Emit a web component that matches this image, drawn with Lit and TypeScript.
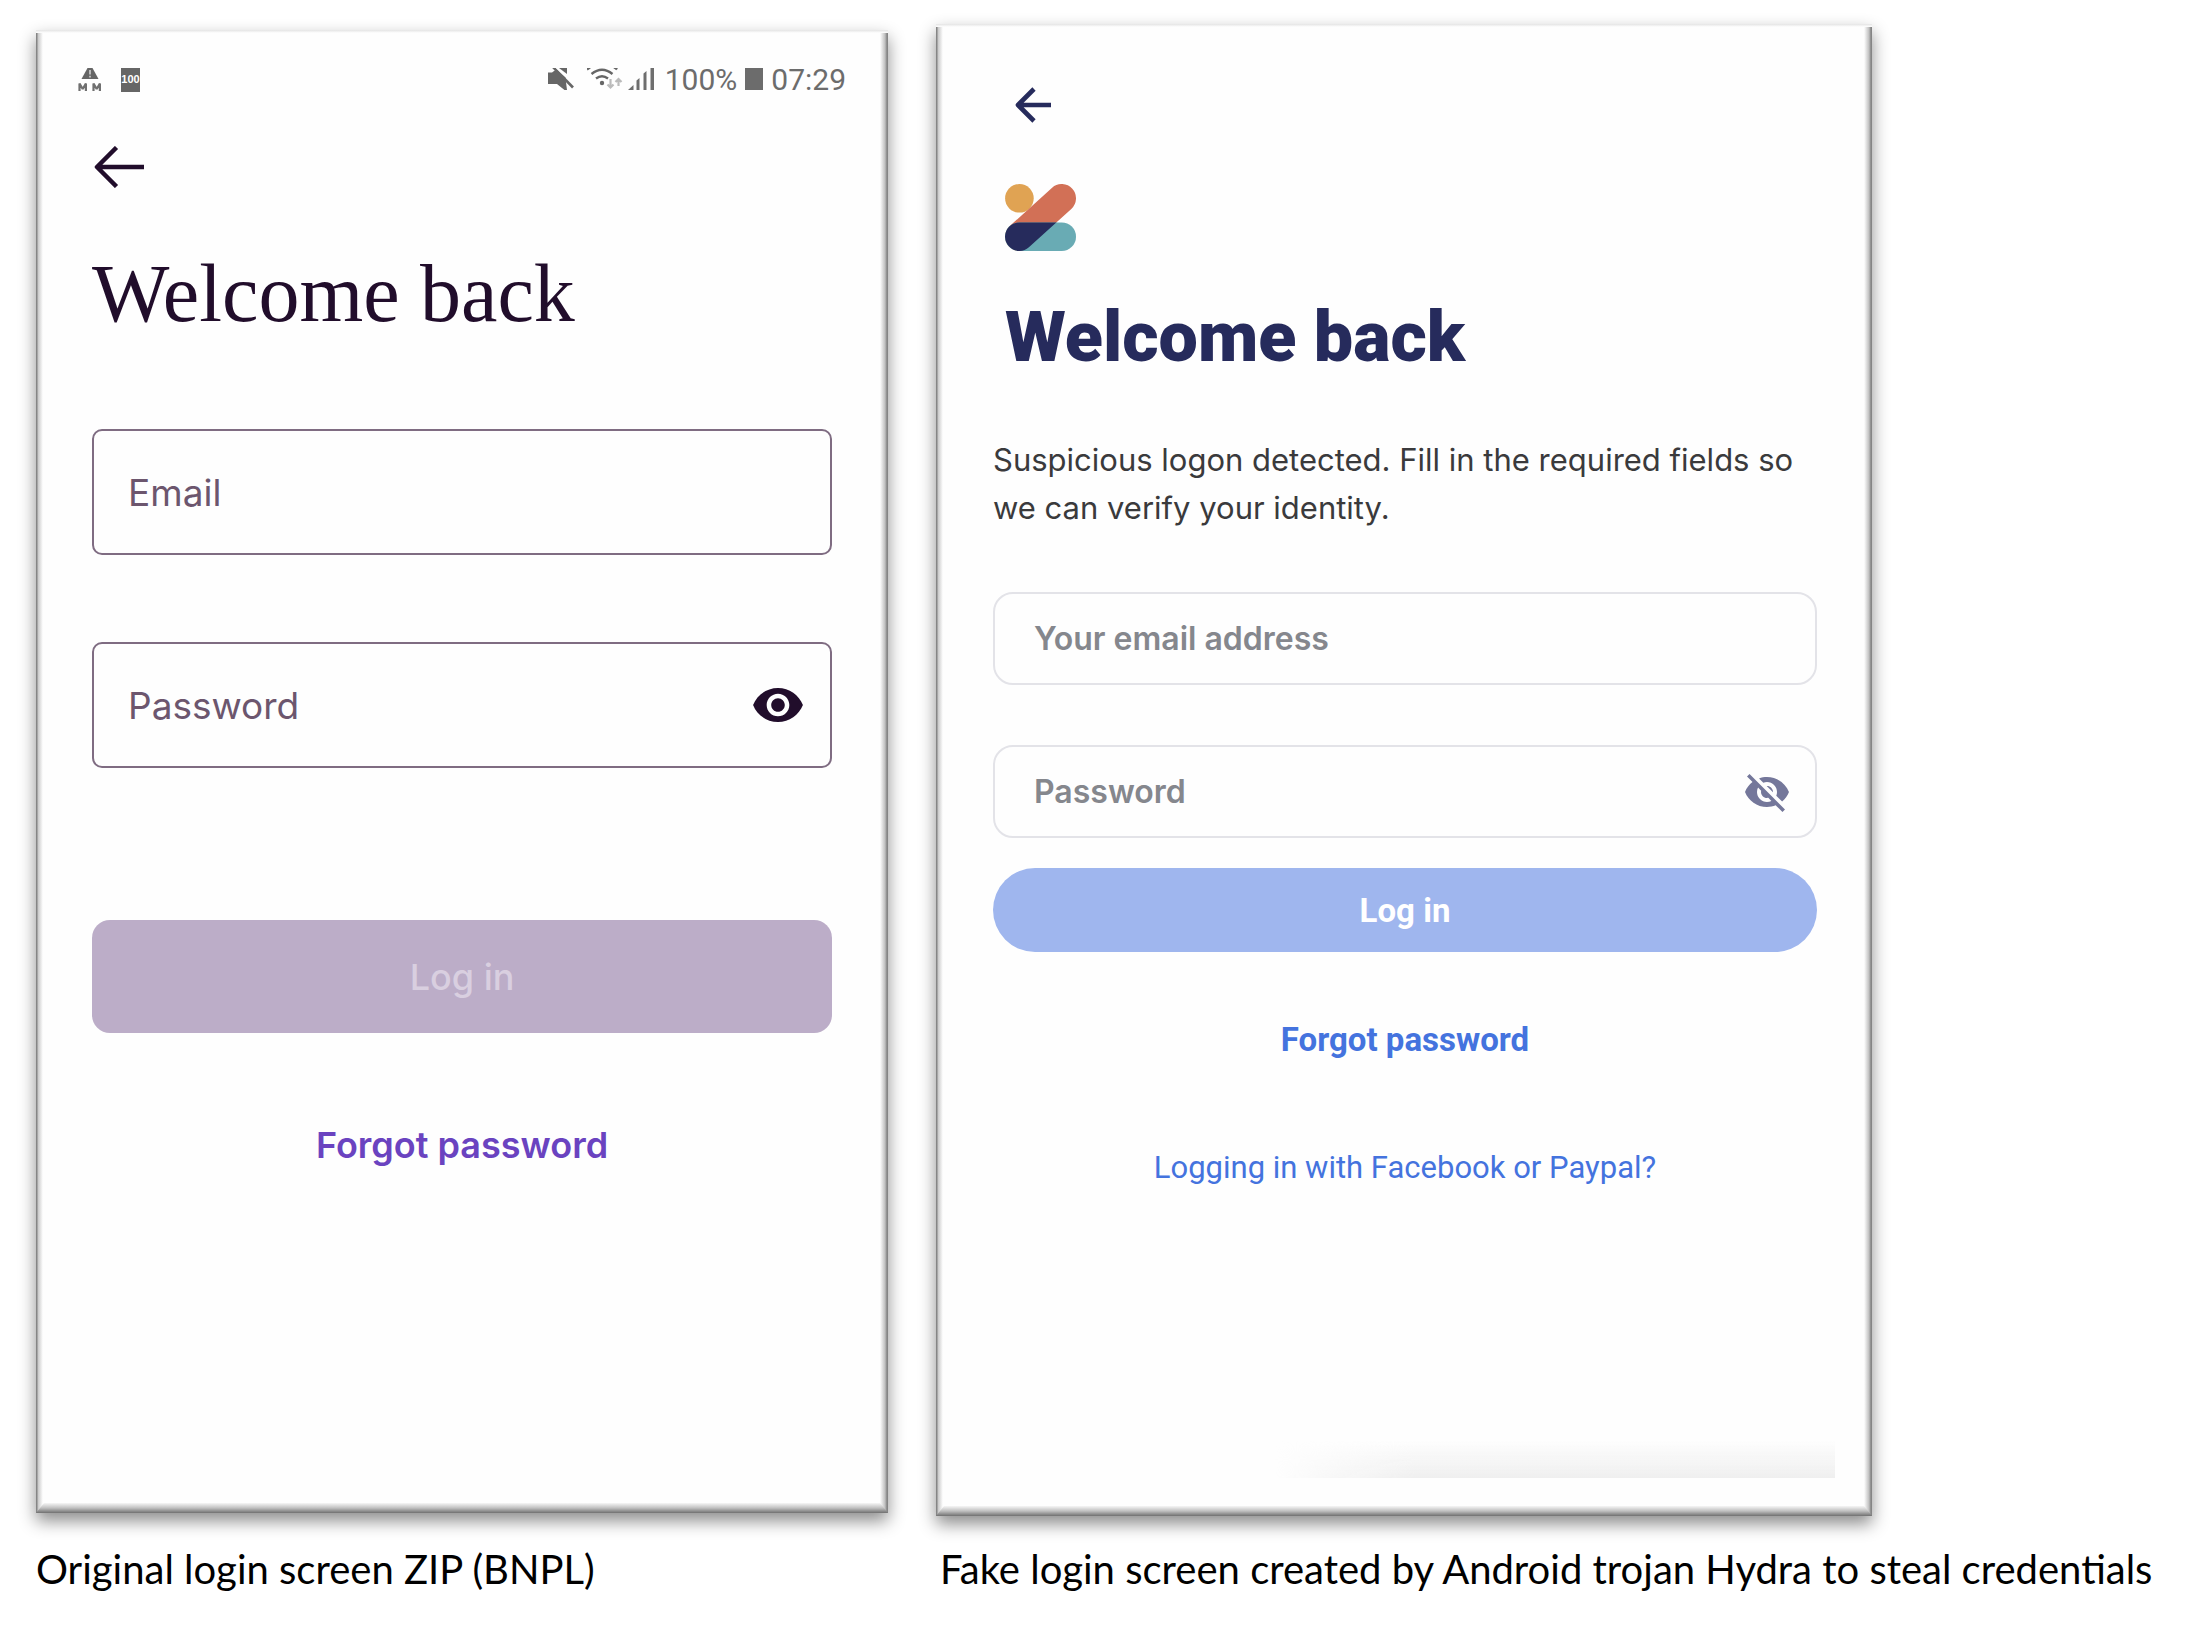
import { LitElement, html, svg, css } from "lit";
import { customElement } from "lit/decorators.js";

const muteIcon = svg`<svg class="mute" viewBox="0 0 26 22" aria-hidden="true">
  <path d="M0 4.500h4L8 1.500l9.500 8v1L19 22h-2.500L9 16H0z" fill="#666"/>
  <path d="M11 0h8v6z" fill="#666"/>
  <path d="M5-1l20 20.500" stroke="#666" stroke-width="2.600"/>
  <path d="M8.500-.500l9.500 8.500" stroke="#fff" stroke-width="1.400"/>
</svg>`;

const wifiIcon = svg`<svg class="wifi" viewBox="0 0 36 24" aria-hidden="true">
  <g fill="none" stroke="#666" stroke-width="2.400">
    <path d="M0 1.500Q2 .2 3-.500M27-.500Q29 .4 30 1.500"/>
    <path d="M4.500 6Q15-2.500 25.500 6"/>
    <path d="M9 10.500q6-4.500 12 0"/>
  </g>
  <circle cx="15" cy="15" r="2.200" fill="#666"/>
  <g fill="none" stroke="#bbb" stroke-width="2.200">
    <path d="M23.500 11v8M20.500 16.500l3 3 3-3M31.500 18v-7M28.500 14l3-3 3 3"/>
  </g>
</svg>`;

const signalIcon = svg`<svg class="signal" viewBox="0 0 27 22" aria-hidden="true">
  <g fill="#6e6e6e"><path d="M0 22l5.500-5v5z"/>
  <path d="M8.500 12.500l3-2.500v12h-3zM15.500 5.500l3-2.500v19h-3zM22.500 0h3.500v22h-3.500z"/></g>
</svg>`;

const alertIcon = svg`<svg class="alert" viewBox="0 0 24 24" aria-hidden="true">
  <path d="M9.500 0h5l6 11h-17z" fill="#666"/>
  <path d="M12 2v4.500M12 7.800v1.800" stroke="#bbb" stroke-width="2"/>
  <path d="M1.500 23v-7.500l3.200 5.500 3.200-5.500v7.500M15.500 23v-7.500l3.200 5.500 3.200-5.500v7.500" fill="none" stroke="#707070" stroke-width="2.200" stroke-linejoin="bevel"/>
</svg>`;

const eyeIcon = svg`<svg class="eye" viewBox="1 4.500 22 15" aria-hidden="true">
  <path fill="currentColor" d="M12 4.500C7 4.500 2.730 7.610 1 12c1.730 4.390 6 7.500 11 7.500s9.270-3.110 11-7.500c-1.730-4.390-6-7.500-11-7.500zM12 17c-2.760 0-5-2.240-5-5s2.240-5 5-5 5 2.240 5 5-2.240 5-5 5zm0-8c-1.660 0-3 1.340-3 3s1.340 3 3 3 3-1.340 3-3-1.340-3-3-3z"/>
</svg>`;

const eyeOffIcon = svg`<svg class="eye-off" viewBox="0 0 24 24" aria-hidden="true">
  <path fill="currentColor" d="M12 7c2.760 0 5 2.240 5 5 0 .65-.13 1.260-.36 1.830l2.920 2.920c1.510-1.260 2.700-2.890 3.430-4.750-1.730-4.390-6-7.500-11-7.500-1.400 0-2.740.25-3.980.7l2.160 2.160C10.740 7.130 11.350 7 12 7zM2 4.270l2.280 2.280.46.46C3.080 8.300 1.780 10.020 1 12c1.730 4.390 6 7.500 11 7.500 1.550 0 3.030-.3 4.380-.84l.42.42L19.730 22 21 20.730 3.270 3 2 4.270zM7.530 9.800l1.550 1.550c-.05.21-.08.43-.08.65 0 1.660 1.340 3 3 3 .22 0 .44-.03.65-.08l1.550 1.550c-.67.33-1.410.53-2.200.53-2.760 0-5-2.240-5-5 0-.79.2-1.530.53-2.200zm4.310-.78l3.150 3.150.02-.16c0-1.660-1.340-3-3-3l-.17.01z"/>
</svg>`;

const logo = svg`<svg class="logo" viewBox="0 0 71 67" role="img" aria-label="Zip">
  <defs><clipPath id="base"><rect y="38.400" width="71" height="28.600" rx="14.300"/></clipPath></defs>
  <circle cx="14.400" cy="14.300" r="14.300" fill="#e0a353"/>
  <path d="M56.700 14.300L14.300 52.700" stroke="#d27056" stroke-width="28.600" stroke-linecap="round"/>
  <rect y="38.400" width="71" height="28.600" rx="14.300" fill="#69abb4"/>
  <path clip-path="url(#base)" d="M56.700 14.300L14.300 52.700" stroke="#262b5c" stroke-width="28.600" stroke-linecap="round"/>
</svg>`;

@customElement("app-root")
export class AppRoot extends LitElement {
  static styles = css`
    :host {
      display: block;
      background: #fff;
    }
    *,
    *::before,
    *::after {
      box-sizing: border-box;
    }
    svg {
      display: block;
      flex: none;
    }
    h2,
    p {
      margin: 0;
    }
    button {
      border: 0;
      padding: 0;
      background: none;
      font: inherit;
      color: inherit;
      cursor: pointer;
    }
    a {
      text-decoration: none;
    }
    .page {
      display: grid;
      grid-template-columns: 852fr 936fr 234fr;
      column-gap: 48px;
      padding: 24px 40px 40px 36px;
    }
    .card {
      position: relative;
      background:
        linear-gradient(to bottom, #e4e4e4, #fff 3px) top / 100% 3px no-repeat,
        linear-gradient(to right, #858585 1px, #c8c8c8 2px, #fff 7px) left / 7px 100% no-repeat,
        linear-gradient(to left, #858585 1px, #c0c0c0 3px, #fff 8px) right / 8px 100% no-repeat,
        #fefefe;
      box-shadow: 0 8px 16px rgba(0, 0, 0, 0.45);
    }
    .card::after {
      content: "";
      position: absolute;
      inset: auto 0 0 0;
      height: 10px;
      background: linear-gradient(to bottom, #f6f6f6, #c0c0c0 50%, #707070);
      clip-path: polygon(0 100%, 8px 0, calc(100% - 8px) 0, 100% 100%);
    }
    .original {
      margin: 6px 0 3px;
      padding-top: 38px;
    }
    .status {
      display: flex;
      justify-content: space-between;
      padding: 0 42px;
      color: #6c6c6c;
      font: 30px/24px Roboto, sans-serif;
    }
    .status-left,
    .status-right {
      display: flex;
      align-items: flex-start;
    }
    .status-left {
      gap: 19px;
    }
    .alert {
      width: 24px;
      height: 24px;
    }
    .battery-badge {
      width: 19px;
      height: 24px;
      background: #666;
      color: #fff;
      font: 700 11px/22px "Liberation Sans", sans-serif;
      text-align: center;
    }
    .mute {
      width: 26px;
      height: 22px;
      margin-right: 13px;
    }
    .wifi {
      width: 36px;
      height: 24px;
      margin-right: 5px;
    }
    .signal {
      width: 27px;
      height: 22px;
      margin-right: 10px;
    }
    .battery {
      width: 18px;
      height: 22px;
      margin: 0 8px;
      background: #6c6c6c;
    }
    .original-body {
      display: flex;
      flex-direction: column;
      padding: 54px 56px 0;
      color: #210d2b;
      font-family: Inter, sans-serif;
    }
    .back {
      align-self: flex-start;
    }
    .original .back svg {
      width: 52px;
      height: 42px;
    }
    .original h2 {
      margin-top: 58px;
      font: 400 82px/96px "Liberation Serif", serif;
    }
    .field {
      display: flex;
      align-items: center;
    }
    .field input {
      flex: 1;
      min-width: 0;
      padding: 0;
      border: 0;
      outline: 0;
      background: none;
      font: inherit;
      color: inherit;
    }
    .field input::placeholder {
      color: inherit;
      opacity: 1;
    }
    .original .field {
      height: 126px;
      margin-top: 87px;
      padding: 0 27px 0 34px;
      border: 2px solid #7f6c82;
      border-radius: 10px;
      color: #6c566e;
      font-size: 37px;
    }
    .original .reveal {
      color: #210d2b;
    }
    .eye {
      width: 50px;
      height: 34px;
    }
    .original .submit {
      height: 113px;
      margin-top: 152px;
      border-radius: 18px;
      background: #bcadc8;
      color: #d9cfe0;
      font-size: 36px;
      font-weight: 500;
    }
    .original .forgot {
      align-self: center;
      margin-top: 92px;
      color: #6a43c0;
      font-size: 36px;
      font-weight: 600;
      line-height: 40px;
    }
    .fake {
      display: flex;
      flex-direction: column;
      padding: 63px 55px 38px 57px;
      color: #262b5c;
      font-family: Inter, sans-serif;
      font-size: 32px;
    }
    .fake .back {
      margin-left: 22px;
    }
    .fake .back svg {
      width: 36px;
      height: 36px;
    }
    .logo {
      width: 71px;
      height: 67px;
      margin: 61px 0 0 12px;
    }
    .fake h2 {
      margin: 44px 0 0 12px;
      font: 900 70px/84px Roboto, sans-serif;
    }
    .notice {
      margin-top: 57px;
      color: #3a3a3c;
      font-size: 31px;
      line-height: 48px;
    }
    .fake .field {
      height: 93px;
      margin-top: 60px;
      padding: 0 24px 0 39px;
      border: 2px solid #e3e3e8;
      border-radius: 20px;
      color: #85878d;
      font-weight: 600;
    }
    .fake .reveal {
      color: #74779a;
    }
    .eye-off {
      width: 48px;
      height: 48px;
    }
    .fake .submit {
      height: 84px;
      margin-top: 30px;
      border-radius: 42px;
      background: #9fb6ee;
      color: #fff;
      font-family: Roboto, sans-serif;
      font-size: 33px;
      font-weight: 700;
    }
    .fake .link {
      align-self: center;
      margin-top: 68px;
      color: #4473de;
      font: 700 33px/40px Roboto, sans-serif;
    }
    .fake .social {
      margin-top: 88px;
      font-size: 31px;
      font-weight: 400;
    }
    .haze {
      align-self: flex-end;
      width: 68%;
      height: 38px;
      margin: 252px -18px 0 0;
      background: linear-gradient(to top, #efefef, rgba(255, 255, 255, 0));
      mask-image: linear-gradient(to right, transparent, #000 25%);
    }
    .caption {
      grid-column: 1;
      margin-top: 29px;
      color: #000;
      font: 40px/48px Lato, sans-serif;
    }
    .caption-fake {
      grid-column: 2 / 4;
      padding-left: 4px;
    }
  `;

  render() {
    return html`
      <main class="page">
        <section class="card original" aria-label="Original login screen">
          <div class="status">
            <div class="status-left">
              ${alertIcon}
              <span class="battery-badge">100</span>
            </div>
            <div class="status-right">
              ${muteIcon}${wifiIcon}${signalIcon}
              <span>100%</span>
              <span class="battery"></span>
              <span>07:29</span>
            </div>
          </div>
          <form class="original-body">
            <button class="back" type="button" aria-label="Back">
              <svg viewBox="0 0 52 42" fill="none" stroke="currentColor" stroke-width="4.500">
                <path d="M24.500 1.500L5 21l19.500 19.500M5 21h47" stroke-linejoin="round" />
              </svg>
            </button>
            <h2>Welcome back</h2>
            <div class="field">
              <input type="email" placeholder="Email" aria-label="Email" />
            </div>
            <div class="field">
              <input type="password" placeholder="Password" aria-label="Password" />
              <button class="reveal" type="button" aria-label="Show password">${eyeIcon}</button>
            </div>
            <button class="submit" type="button">Log in</button>
            <a class="forgot" href="#">Forgot password</a>
          </form>
        </section>

        <form class="card fake" aria-label="Fake login screen">
          <button class="back" type="button" aria-label="Back">
            <svg viewBox="0 0 36 36" fill="none" stroke="currentColor" stroke-width="4.600">
              <path d="M19 2L3 18l16 16M3 18h33" stroke-linejoin="round" />
            </svg>
          </button>
          ${logo}
          <h2>Welcome back</h2>
          <p class="notice">
            Suspicious logon detected. Fill in the required fields so we can verify your identity.
          </p>
          <div class="field">
            <input type="email" placeholder="Your email address" aria-label="Your email address" />
          </div>
          <div class="field">
            <input type="password" placeholder="Password" aria-label="Password" />
            <button class="reveal" type="button" aria-label="Show password">${eyeOffIcon}</button>
          </div>
          <button class="submit" type="button">Log in</button>
          <a class="link" href="#">Forgot password</a>
          <a class="link social" href="#">Logging in with Facebook or Paypal?</a>
          <div class="haze"></div>
        </form>

        <p class="caption">Original login screen ZIP (BNPL)</p>
        <p class="caption caption-fake">
          Fake login screen created by Android trojan Hydra to steal credentials
        </p>
      </main>
    `;
  }
}
